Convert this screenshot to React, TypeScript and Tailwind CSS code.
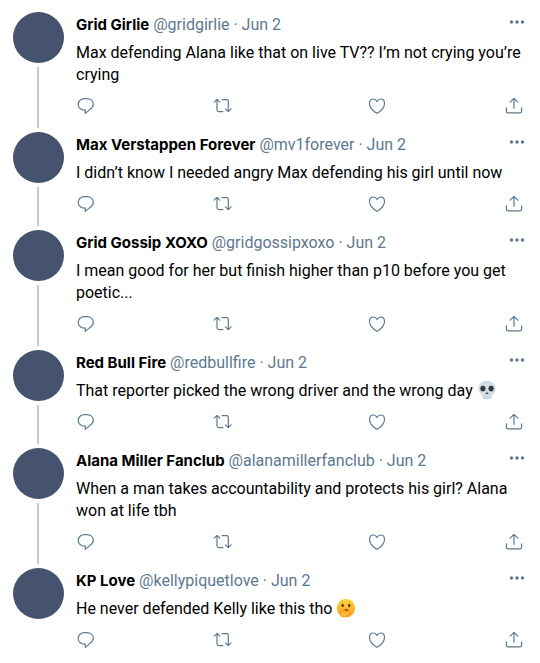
import type { ReactNode } from "react";

type Tweet = {
  name: string;
  handle: string;
  text: string;
  emoji?: ReactNode;
};

function Skull() {
  return (
    <svg viewBox="0 0 20 20" className="-mt-2 ml-1 inline-block size-5 align-[-4px]" role="img" aria-label="skull">
      <path
        d="M10 .8C4.900.8 1.300 4 1.300 8.600c0 2.300.7 4 1.900 5 .9.8 1.700 1 1.900 1.900.2.900 0 2.200.6 2.800.8.7 2.400 1 4.300 1s3.500-.3 4.300-1c.6-.6.4-1.900.6-2.800.2-.9 1-1.100 1.900-1.900 1.200-1 1.900-2.700 1.900-5C18.700 4 15.100.8 10 .8z"
        fill="#d3dde5"
      />
      <path d="M7.600 16.500v2.300M10 16.500v2.500M12.400 16.500v2.300" stroke="#aebdc8" strokeWidth=".6" />
      <rect x="3.300" y="5.800" width="5.200" height="5.600" rx="2.400" fill="#333a42" />
      <rect x="11.500" y="5.800" width="5.200" height="5.600" rx="2.400" fill="#333a42" />
      <path d="M10 12l1.600 2.100H8.400z" fill="#333a42" />
    </svg>
  );
}

function HandOverMouth() {
  return (
    <svg viewBox="0 0 20 20" className="-mt-2 ml-1 inline-block size-5 align-[-4px]" role="img" aria-label="face with hand over mouth">
      <defs>
        <linearGradient id="face" x1="0" y1="0" x2="0" y2="1">
          <stop offset="0" stopColor="#ffd93a" />
          <stop offset="1" stopColor="#fa9a1c" />
        </linearGradient>
      </defs>
      <circle cx="10" cy="10" r="9.200" fill="url(#face)" />
      <path d="M5 4.200q.7-.8 1.900-.8M15 4.200q-.7-.8-1.900-.8" stroke="#d08a25" strokeWidth=".7" fill="none" />
      <ellipse cx="6.700" cy="7.500" rx="1.200" ry="1.700" fill="#5b3414" />
      <ellipse cx="13.300" cy="7.500" rx="1.200" ry="1.700" fill="#5b3414" />
      <ellipse cx="10" cy="12.200" rx="2.700" ry="1.300" fill="#a35a18" />
      <path
        d="M4.700 18.200c-.7-1.700-.4-3.400.7-4.200l3.400-1.700c.8-.3 1.200.4.6.9l-.7.700 3.900-1.100c.9-.2 1.200.8.3 1.200.8 0 1 1 .2 1.300.6.2.6 1.100-.2 1.400l-3.300 1.700c-1.500.8-3.500.9-4.900-.2z"
        fill="#ffb833"
        stroke="#e58a1c"
        strokeWidth=".5"
      />
    </svg>
  );
}

const tweets: Tweet[] = [
  {
    name: "Grid Girlie",
    handle: "@gridgirlie",
    text: "Max defending Alana like that on live TV?? I’m not crying you’re crying",
  },
  {
    name: "Max Verstappen Forever",
    handle: "@mv1forever",
    text: "I didn’t know I needed angry Max defending his girl until now",
  },
  {
    name: "Grid Gossip XOXO",
    handle: "@gridgossipxoxo",
    text: "I mean good for her but finish higher than p10 before you get poetic...",
  },
  {
    name: "Red Bull Fire",
    handle: "@redbullfire",
    text: "That reporter picked the wrong driver and the wrong day",
    emoji: <Skull />,
  },
  {
    name: "Alana Miller Fanclub",
    handle: "@alanamillerfanclub",
    text: "When a man takes accountability and protects his girl? Alana won at life tbh",
  },
  {
    name: "KP Love",
    handle: "@kellypiquetlove",
    text: "He never defended Kelly like this tho",
    emoji: <HandOverMouth />,
  },
];

function Action({ label, children }: { label: string; children: ReactNode }) {
  return (
    <button type="button" aria-label={label} className="text-[#5d7890]">
      <svg
        viewBox="0 0 20 20"
        className="size-5"
        fill="none"
        stroke="currentColor"
        strokeWidth="1.200"
        strokeLinecap="round"
        strokeLinejoin="round"
        aria-hidden="true"
      >
        {children}
      </svg>
    </button>
  );
}

function TweetRow({ tweet, last }: { tweet: Tweet; last: boolean }) {
  return (
    <article className="flex gap-3">
      <div className="flex shrink-0 flex-col">
        <div className="size-[51px] rounded-full bg-[#46536f]" />
        {!last && <div className="my-1 ml-6 w-0.5 grow bg-[#c0ccd6]" />}
      </div>
      <div className="min-w-0 grow pr-4 pb-4">
        <header className="flex h-7 items-start justify-between">
          <p className="truncate pt-0.5 leading-[22px] text-[#5d7890]">
            <span className="font-[Inter,'Liberation_Sans',sans-serif] text-[15px] leading-[22px] font-bold text-black">
              {tweet.name}
            </span>{" "}
            {tweet.handle} · Jun 2
          </p>
          <button type="button" aria-label="More" className="-mr-px pt-2 text-[#5d7890]">
            <svg viewBox="0 0 16 4" className="h-1 w-4" fill="currentColor" aria-hidden="true">
              <circle cx="2.500" cy="2" r="1.700" />
              <circle cx="8" cy="2" r="1.700" />
              <circle cx="13.500" cy="2" r="1.700" />
            </svg>
          </button>
        </header>
        <p className="pt-0.5 leading-[22px] text-black">
          {tweet.text}
          {tweet.emoji}
        </p>
        <div className="flex h-[30px] items-end justify-between">
          <div className="flex w-[35%] justify-between">
            <Action label="Reply">
              <path d="M8.600 2.600h2.200c3.600 0 6.500 2.300 6.500 5.500 0 2.200-1.300 4-3.500 5.500L9.300 17.400v-3.200h-.7c-3.600 0-6.400-2.500-6.400-5.800 0-3.400 2.800-5.800 6.400-5.800z" />
            </Action>
            <Action label="Retweet">
              <path d="M1.200 6.200L4 3.400l2.800 2.800M4 3.600v10.200c0 1.100.7 1.800 1.800 1.800h4M9 3.600h4.500c1.100 0 1.800.7 1.800 1.800v10.200M12.500 12.900l2.800 2.800 2.800-2.800" />
            </Action>
          </div>
          <div className="flex w-[35%] justify-between">
            <Action label="Like">
              <path d="M10 17.200C6.500 15.200 2.500 11.400 2.500 7.400c0-2.600 1.700-4.400 3.900-4.400 1.500 0 2.800.9 3.600 2.500.8-1.600 2.100-2.500 3.600-2.500 2.200 0 3.900 1.800 3.900 4.400 0 4-4 7.800-7.500 9.800z" />
            </Action>
            <Action label="Share">
              <path d="M10 12.300V2.600M6.200 6.200L10 2.400l3.800 3.800M2.400 11.900v3.400c0 1 .6 1.600 1.600 1.600h12c1 0 1.600-.6 1.600-1.600v-3.400" />
            </Action>
          </div>
        </div>
      </div>
    </article>
  );
}

export default function App() {
  return (
    <main className="min-h-screen bg-white pt-3 pl-[13px] font-[Roboto,'Liberation_Sans',sans-serif] text-base">
      {tweets.map((tweet, i) => (
        <TweetRow key={tweet.handle} tweet={tweet} last={i === tweets.length - 1} />
      ))}
    </main>
  );
}
